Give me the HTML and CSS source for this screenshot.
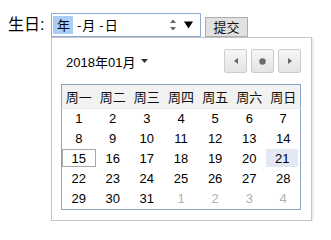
FILE: index.html
```html
<!DOCTYPE html>
<html lang="zh-CN">
<head>
<meta charset="utf-8">
<link rel="stylesheet" href="styles.css">
</head>
<body>
<div class="row">
  <label class="label">生日:</label>
  <div class="field">
    <span class="seg sel">年</span><span class="sep">-</span><span class="seg">月</span><span class="sep">-</span><span class="seg">日</span>
    <span class="spacer"></span>
    <svg class="spin" width="8" height="14" viewBox="0 0 8 14"><path d="M1 5 L4 1.5 L7 5 Z" fill="#666"/><path d="M1 9 L4 12.5 L7 9 Z" fill="#666"/></svg>
    <svg class="drop" width="9" height="8" viewBox="0 0 9 8"><path d="M0 0.5 H9 L4.5 7.5 Z" fill="#000"/></svg>
  </div>
  <button class="btn">提交</button>
</div>
<div class="popup">
  <div class="head">
    <span class="month">2018年01月<svg class="caret" width="7" height="4" viewBox="0 0 7 4"><path d="M0 0 H7 L3.5 4 Z" fill="#333"/></svg></span>
    <div class="nav">
      <span class="nbtn"><svg width="4" height="6" viewBox="0 0 4 6"><path d="M4 0 V6 L0 3 Z" fill="#666"/></svg></span>
      <span class="nbtn"><svg width="7" height="7" viewBox="0 0 7 7"><circle cx="3.5" cy="3.5" r="3.2" fill="#6a6a6a"/></svg></span>
      <span class="nbtn"><svg width="4" height="6" viewBox="0 0 4 6"><path d="M0 0 V6 L4 3 Z" fill="#666"/></svg></span>
    </div>
  </div>
  <table class="cal">
    <thead>
      <tr><th>周一</th><th>周二</th><th>周三</th><th>周四</th><th>周五</th><th>周六</th><th>周日</th></tr>
    </thead>
    <tbody>
      <tr><td>1</td><td>2</td><td>3</td><td>4</td><td>5</td><td>6</td><td>7</td></tr>
      <tr><td>8</td><td>9</td><td>10</td><td>11</td><td>12</td><td>13</td><td>14</td></tr>
      <tr><td><div class="today">15</div></td><td>16</td><td>17</td><td>18</td><td>19</td><td>20</td><td><div class="hover">21</div></td></tr>
      <tr><td>22</td><td>23</td><td>24</td><td>25</td><td>26</td><td>27</td><td>28</td></tr>
      <tr><td>29</td><td>30</td><td>31</td><td class="other">1</td><td class="other">2</td><td class="other">3</td><td class="other">4</td></tr>
    </tbody>
  </table>
</div>
</body>
</html>
```
FILE: styles.css
```css
html, body {
  margin: 0;
  padding: 0;
  background: #fff;
}
body {
  font-family: "Liberation Sans", Arial, "Noto Sans CJK SC", sans-serif;
  color: #000;
}
.row {
  display: flex;
  align-items: flex-start;
  padding: 13px 0 0 8px;
  height: 24px;
}
.label {
  font-size: 16px;
  line-height: 24px;
  width: 43px;
  font-family: "Liberation Sans", "Noto Sans CJK SC", sans-serif;
}
.field {
  box-sizing: border-box;
  width: 150px;
  height: 24px;
  border: 1px solid #8fa9d6;
  display: flex;
  align-items: center;
  padding: 0 7px 0 1px;
  font-size: 13px;
}
.seg {
  font-family: "Noto Sans CJK SC", sans-serif;
  line-height: 18px;
  height: 18px;
  display: inline-block;
}
.sel {
  background: #a9cdf5;
  padding: 0 4px;
  width: 12px;
  text-align: center;
}
.sep {
  padding: 0 1px 0 4px;
}
.spacer {
  flex: 1;
}
.spin {
  margin-right: 7px;
}
.drop {
  display: block;
}
.btn {
  margin: 4px 0 0 4px;
  box-sizing: border-box;
  width: 43px;
  height: 20px;
  padding: 0;
  border: 1px solid #adadad;
  background: #e1e1e1;
  font-size: 13px;
  font-family: "Noto Sans CJK SC", sans-serif;
  color: #111;
  line-height: 18px;
}
.popup {
  margin-left: 51px;
  box-sizing: border-box;
  width: 261px;
  height: 184px;
  background: #fff;
  border: 1px solid #c4c4c4;
  box-shadow: 1px 1px 2px rgba(0,0,0,0.12);
  padding: 11px 10px 10px 9px;
  display: flex;
  flex-direction: column;
  gap: 11px;
}
.head {
  display: flex;
  align-items: center;
  justify-content: space-between;
  height: 24px;
}
.month {
  font-size: 13px;
  padding-left: 5px;
  font-family: "Liberation Sans", "Noto Sans CJK SC", sans-serif;
  display: flex;
  align-items: center;
  gap: 6px;
}
.nav {
  display: flex;
  gap: 4px;
}
.nbtn {
  box-sizing: border-box;
  width: 23px;
  height: 24px;
  border: 1px solid #cdcdcd;
  border-radius: 2px;
  background: linear-gradient(#f6f6f6, #e4e4e4);
  display: flex;
  align-items: center;
  justify-content: center;
}
.cal {
  border-collapse: collapse;
  width: 240px;
  border: 1px solid #8da3c8;
  table-layout: fixed;
  font-size: 13px;
}
.cal th {
  background: #f2f2f2;
  height: 23px;
  padding: 0;
  font-weight: normal;
  font-family: "Noto Sans CJK SC", sans-serif;
  font-size: 13px;
  color: #111;
  border-bottom: 1px solid #e6e6e6;
}
.cal td {
  height: 20px;
  padding: 0;
  text-align: center;
  vertical-align: top;
  line-height: 19px;
}
.cal td.other {
  color: #b0b0b0;
}
.today {
  box-sizing: border-box;
  height: 18px;
  line-height: 17px;
  border: 1px solid #a8a8a8;
}
.hover {
  height: 18px;
  line-height: 19px;
  background: #e3e8f4;
  margin-right: 2px;
}
```
